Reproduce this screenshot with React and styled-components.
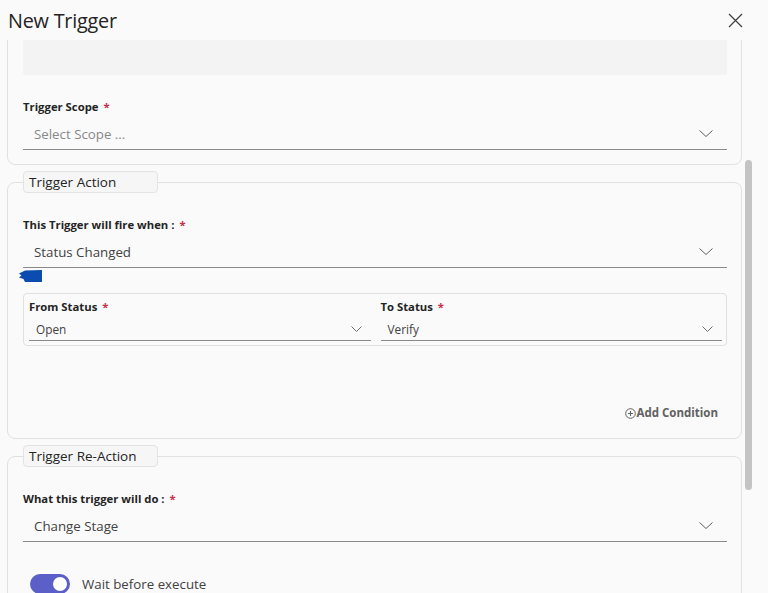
import React, { useLayoutEffect, useRef } from "react"
import styled, { createGlobalStyle } from "styled-components"

const GlobalStyle = createGlobalStyle`
  html, body {
    margin: 0;
    padding: 0;
    background: #fafafa;
  }
  body {
    font-family: "Segoe UI", "Open Sans", "Noto Sans", sans-serif;
    color: #242424;
  }
  * {
    box-sizing: border-box;
  }
`

export default function App() {
  const Scroller = useRef(null)
  const DescBox = useRef(null)

  // the dialog is shown already scrolled a bit, description box half out of view
  useLayoutEffect(() => {
    let scroller = Scroller.current
    let box = DescBox.current
    if (!scroller || !box) return
    let top = scroller.getBoundingClientRect().top
    scroller.scrollTop += box.getBoundingClientRect().bottom - (top + 35)
  }, [])

  return (
    <Dialog>
      <GlobalStyle />
      <Header>
        <Title>New Trigger</Title>
        <CloseButton aria-label="Close">
          <svg width="15" height="15" viewBox="0 0 15 15">
            <path d="M1 1 L14 14 M14 1 L1 14" stroke="#424242" strokeWidth="1.3" fill="none" />
          </svg>
        </CloseButton>
      </Header>
      <Body>
        <ScrollArea ref={Scroller}>
          <Card first>
            <TextBox ref={DescBox} />
            <Field>
              <Label>
                Trigger Scope <Req>*</Req>
              </Label>
              <Select placeholder>Select Scope ...</Select>
            </Field>
          </Card>

          <Card>
            <Legend>Trigger Action</Legend>
            <Field>
              <Label>
                This Trigger will fire when : <Req>*</Req>
              </Label>
              <Select>Status Changed</Select>
            </Field>
            <Marker width="23" height="12" viewBox="0 0 23 12">
              <path d="M6 0.5 L23 0 L23 12 L6 12 L4.5 9 L0 7.5 L2.5 5.5 L0 3.5 Z" fill="#0a4cb0" />
            </Marker>
            <StatusBox>
              <div>
                <Label>
                  From Status <Req>*</Req>
                </Label>
                <Select small>Open</Select>
              </div>
              <div>
                <Label>
                  To Status <Req>*</Req>
                </Label>
                <Select small>Verify</Select>
              </div>
            </StatusBox>
            <AddRow>
              <AddButton>
                <svg width="11" height="11" viewBox="0 0 11 11">
                  <circle cx="5.5" cy="5.5" r="4.8" stroke="#616161" strokeWidth="1" fill="none" />
                  <path d="M5.5 3 V8 M3 5.5 H8" stroke="#616161" strokeWidth="1.1" />
                </svg>
                Add Condition
              </AddButton>
            </AddRow>
          </Card>

          <Card>
            <Legend>Trigger Re-Action</Legend>
            <Field>
              <Label>
                What this trigger will do : <Req>*</Req>
              </Label>
              <Select>Change Stage</Select>
            </Field>
            <ToggleRow>
              <Toggle on />
              <ToggleText>Wait before execute</ToggleText>
            </ToggleRow>
          </Card>
        </ScrollArea>
        <Thumb />
      </Body>
    </Dialog>
  )
}

function Select({ children, placeholder, small }) {
  return (
    <SelectBox small={small}>
      <SelectText placeholder={placeholder} small={small}>
        {children}
      </SelectText>
      {small ? (
        <svg width="11" height="6" viewBox="0 0 11 6">
          <path d="M0.5 0.5 L5.5 5.5 L10.5 0.5" stroke="#616161" strokeWidth="0.9" fill="none" />
        </svg>
      ) : (
        <svg width="14" height="7" viewBox="0 0 14 7">
          <path d="M0.5 0.5 L7 6.5 L13.5 0.5" stroke="#616161" strokeWidth="1" fill="none" />
        </svg>
      )}
    </SelectBox>
  )
}

const Dialog = styled.div`
  height: 593px;
  display: flex;
  flex-direction: column;
  overflow: hidden;
`

const Header = styled.div`
  height: 40px;
  flex: none;
  display: flex;
  align-items: center;
  justify-content: space-between;
  padding: 0 25px 0 8px;
`

const Title = styled.h1`
  margin: 0;
  font-size: 19.8px;
  font-weight: 400;
  color: #242424;
  letter-spacing: -0.2px;
`

const CloseButton = styled.button`
  border: none;
  background: none;
  padding: 0;
  display: flex;
  cursor: pointer;
`

const Body = styled.div`
  flex: 1;
  min-height: 0;
  position: relative;
`

const ScrollArea = styled.div`
  height: 100%;
  overflow: hidden;
  padding: 0 26px 80px 7px;
`

const Thumb = styled.div`
  position: absolute;
  left: 745px;
  top: 120px;
  width: 7px;
  height: 330px;
  border-radius: 4px;
  background: #c4c4c4;
`

const Card = styled.fieldset`
  margin: ${(p) => (p.first ? "0" : "6px 0 0")};
  min-width: 0;
  border: 1px solid #e1e1e1;
  border-radius: 8px;
  padding: ${(p) => (p.first ? "16px 14px 14px 15px" : "0 14px 14px 15px")};
`

const Legend = styled.legend`
  width: 135px;
  height: 22px;
  padding: 0 5px;
  border: 1px solid #e3e3e3;
  border-radius: 4px;
  background: #f6f6f6;
  font-size: 13.5px;
  line-height: 20px;
  color: #242424;
`

const Field = styled.div`
  margin-top: 24px;
`

const Label = styled.div`
  font-size: 11.3px;
  font-weight: 700;
  line-height: 16px;
  color: #242424;
`

const Req = styled.span`
  color: #c4314b;
  margin-left: 2px;
`

const SelectBox = styled.div`
  margin-top: ${(p) => (p.small ? "2px" : "3px")};
  height: ${(p) => (p.small ? "24px" : "32px")};
  display: flex;
  align-items: center;
  justify-content: space-between;
  padding: ${(p) => (p.small ? "0 9px 0 7px" : "0 14px 0 11px")};
  border-bottom: 1px solid #8a8a8a;
`

const SelectText = styled.span`
  font-size: ${(p) => (p.small ? "11.8px" : "13.3px")};
  color: ${(p) => (p.placeholder ? "#888888" : "#424242")};
`

const TextBox = styled.div`
  height: 60px;
  background: #f3f3f3;
  border-radius: 2px;
`

const Marker = styled.svg`
  display: block;
  margin: 2px 0 0 -4px;
`

const StatusBox = styled.div`
  margin-top: 11px;
  display: grid;
  grid-template-columns: 1fr 1fr;
  gap: 10px;
  padding: 5px 4px 4px 5px;
  border: 1px solid #e0e0e0;
  border-radius: 4px;
`

const AddRow = styled.div`
  margin-top: 59px;
  margin-bottom: 3px;
  display: flex;
  justify-content: flex-end;
  padding-right: 9px;
`

const AddButton = styled.button`
  border: none;
  background: none;
  padding: 0;
  display: flex;
  align-items: center;
  gap: 1px;
  font-family: inherit;
  font-size: 11.5px;
  font-weight: 700;
  line-height: 16px;
  color: #616161;
  cursor: pointer;
`

const ToggleRow = styled.div`
  margin-top: 32px;
  display: flex;
  align-items: center;
  gap: 12px;
  padding-left: 7px;
`

const Toggle = styled.span`
  position: relative;
  width: 40px;
  height: 20px;
  border-radius: 10px;
  background: ${(p) => (p.on ? "#5b5fc7" : "#c4c4c4")};
  &::after {
    content: "";
    position: absolute;
    top: 3px;
    left: ${(p) => (p.on ? "23px" : "3px")};
    width: 14px;
    height: 14px;
    border-radius: 50%;
    background: #fff;
  }
`

const ToggleText = styled.span`
  font-size: 13.3px;
  color: #424242;
`
